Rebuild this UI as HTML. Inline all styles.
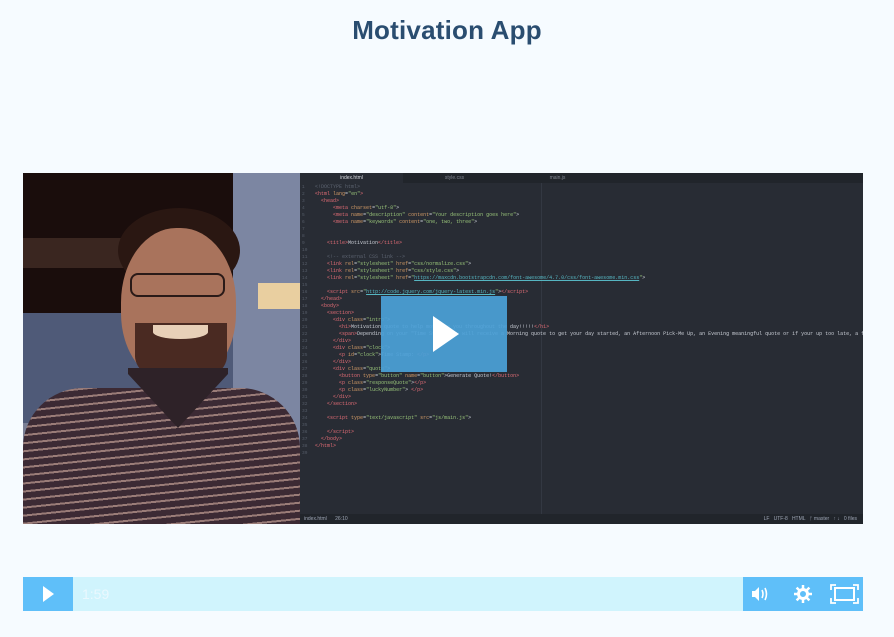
<!DOCTYPE html>
<html><head><style>
body{margin:0;width:894px;height:637px;background:#f6fbff;font-family:"Liberation Sans",sans-serif;position:relative;overflow:hidden}
h1{position:absolute;top:15px;left:0;width:894px;text-align:center;margin:0;font-size:26px;font-weight:bold;color:#2a4d70;letter-spacing:0.2px}
.abs{position:absolute}
#vid{left:23px;top:173px;width:840px;height:351px;overflow:hidden;background:#282c34}
#cam{left:0;top:0;width:277px;height:351px;background:#7a7f95;overflow:hidden}
#ed{left:277px;top:0;width:563px;height:351px;background:#282c34}
.code{position:absolute;left:15px;top:11px;font-family:"Liberation Mono",monospace;font-size:5px;line-height:7px;color:#c8ccd4;white-space:pre}
.ln{position:absolute;left:2px;top:11px;font-family:"Liberation Mono",monospace;font-size:4.5px;line-height:7px;color:#555c68;white-space:pre}
.t{color:#e06c75}.a{color:#d19a66}.s{color:#98c379}.c{color:#5c6370}.u{color:#56b6c2;text-decoration:underline}
</style></head><body>
<h1>Motivation App</h1>
<div id="vid" class="abs">
 <div id="cam" class="abs">
  <div class="abs" style="left:0;top:0;width:210px;height:140px;background:#1a0d0c"></div>
  <div class="abs" style="left:0;top:65px;width:210px;height:30px;background:#3a2620"></div>
  <div class="abs" style="left:0;top:140px;width:210px;height:110px;background:#4f5a78"></div>
  <div class="abs" style="left:210px;top:0;width:67px;height:351px;background:#7c86a2"></div>
  <div class="abs" style="left:235px;top:110px;width:42px;height:26px;background:#e9cfa0"></div>
  <div class="abs" style="left:95px;top:35px;width:122px;height:85px;border-radius:50%;background:#2a1712"></div>
  <div class="abs" style="left:98px;top:55px;width:115px;height:155px;border-radius:48% 48% 45% 45%;background:#a9735c"></div>
  <div class="abs" style="left:112px;top:150px;width:92px;height:60px;border-radius:0 0 45% 45%;background:#4a2a22"></div>
  <div class="abs" style="left:130px;top:152px;width:55px;height:14px;border-radius:0 0 50% 50%;background:#e8d0b8"></div>
  <div class="abs" style="left:107px;top:100px;width:95px;height:24px;border:2px solid #2a1a18;border-radius:8px;box-sizing:border-box"></div>
  <div class="abs" style="left:0;top:215px;width:277px;height:136px;border-radius:60px 60px 0 0;background:repeating-linear-gradient(174deg,#3c2a34 0 6px,#9a7c78 6px 8px)"></div>
  <div class="abs" style="left:105px;top:195px;width:100px;height:60px;background:#2e2228;clip-path:polygon(0 10%,50% 100%,100% 10%,100% 0,0 0)"></div>
 </div>
 <div id="ed" class="abs">
  <div class="abs" style="left:0;top:0;width:563px;height:10px;background:#21252b"></div>
  <div class="abs" style="left:0;top:0;width:103px;height:10px;background:#282c34;font-size:5px;color:#d7dae0;text-align:center;line-height:10px">index.html</div>
  <div class="abs" style="left:103px;top:0;width:103px;height:10px;font-size:5px;color:#7f8490;text-align:center;line-height:10px">style.css</div>
  <div class="abs" style="left:206px;top:0;width:103px;height:10px;font-size:5px;color:#7f8490;text-align:center;line-height:10px">main.js</div>
  <div class="abs" style="left:241px;top:10px;width:1px;height:331px;background:#333842"></div>
  <div class="ln">1
2
3
4
5
6
7
8
9
10
11
12
13
14
15
16
17
18
19
20
21
22
23
24
25
26
27
28
29
30
31
32
33
34
35
36
37
38
39</div>
  <div class="code"><span class="c">&lt;!DOCTYPE html&gt;</span>
<span class="t">&lt;html</span> <span class="a">lang</span>=<span class="s">"en"</span><span class="t">&gt;</span>
  <span class="t">&lt;head&gt;</span>
      <span class="t">&lt;meta</span> <span class="a">charset</span>=<span class="s">"utf-8"</span>&gt;
      <span class="t">&lt;meta</span> <span class="a">name</span>=<span class="s">"description"</span> <span class="a">content</span>=<span class="s">"Your description goes here"</span>&gt;
      <span class="t">&lt;meta</span> <span class="a">name</span>=<span class="s">"keywords"</span> <span class="a">content</span>=<span class="s">"one, two, three"</span>&gt;


    <span class="t">&lt;title&gt;</span>Motivation<span class="t">&lt;/title&gt;</span>

    <span class="c">&lt;!-- external CSS link --&gt;</span>
    <span class="t">&lt;link</span> <span class="a">rel</span>=<span class="s">"stylesheet"</span> <span class="a">href</span>=<span class="s">"css/normalize.css"</span>&gt;
    <span class="t">&lt;link</span> <span class="a">rel</span>=<span class="s">"stylesheet"</span> <span class="a">href</span>=<span class="s">"css/style.css"</span>&gt;
    <span class="t">&lt;link</span> <span class="a">rel</span>=<span class="s">"stylesheet"</span> <span class="a">href</span>=<span class="s">"</span><span class="u">https://maxcdn.bootstrapcdn.com/font-awesome/4.7.0/css/font-awesome.min.css</span><span class="s">"</span>&gt;

    <span class="t">&lt;script</span> <span class="a">src</span>=<span class="s">"</span><span class="u">http://code.jquery.com/jquery-latest.min.js</span><span class="s">"</span>&gt;<span class="t">&lt;/script&gt;</span>
  <span class="t">&lt;/head&gt;</span>
  <span class="t">&lt;body&gt;</span>
    <span class="t">&lt;section&gt;</span>
      <span class="t">&lt;div</span> <span class="a">class</span>=<span class="s">"intro"</span>&gt;
        <span class="t">&lt;h1&gt;</span>Motivation quote to help motivate you throughout the day!!!!!<span class="t">&lt;/h1&gt;</span>
        <span class="t">&lt;span&gt;</span>Depending on your "Time Stamp" you will receive a Morning quote to get your day started, an Afternoon Pick-Me Up, an Evening meaningful quote or if your up too late, a funny quote
      <span class="t">&lt;/div&gt;</span>
      <span class="t">&lt;div</span> <span class="a">class</span>=<span class="s">"clock"</span>&gt;
        <span class="t">&lt;p</span> <span class="a">id</span>=<span class="s">"clock"</span>&gt;Time Stamp: <span class="t">&lt;/p&gt;</span>
      <span class="t">&lt;/div&gt;</span>
      <span class="t">&lt;div</span> <span class="a">class</span>=<span class="s">"quote"</span>&gt;
        <span class="t">&lt;button</span> <span class="a">type</span>=<span class="s">"button"</span> <span class="a">name</span>=<span class="s">"button"</span>&gt;Generate Quote!<span class="t">&lt;/button&gt;</span>
        <span class="t">&lt;p</span> <span class="a">class</span>=<span class="s">"responseQuote"</span>&gt;<span class="t">&lt;/p&gt;</span>
        <span class="t">&lt;p</span> <span class="a">class</span>=<span class="s">"luckyNumber"</span>&gt; <span class="t">&lt;/p&gt;</span>
      <span class="t">&lt;/div&gt;</span>
    <span class="t">&lt;/section&gt;</span>

    <span class="t">&lt;script</span> <span class="a">type</span>=<span class="s">"text/javascript"</span> <span class="a">src</span>=<span class="s">"js/main.js"</span>&gt;

    <span class="t">&lt;/script&gt;</span>
  <span class="t">&lt;/body&gt;</span>
<span class="t">&lt;/html&gt;</span>
</div>
  <div class="abs" style="left:0;top:341px;width:563px;height:10px;background:#21252b;font-size:5px;color:#9da5b4;line-height:10px;padding-left:4px;box-sizing:border-box">index.html &nbsp;&nbsp;&nbsp;&nbsp; 26:10<span style="position:absolute;right:6px">LF &nbsp; UTF-8 &nbsp; HTML &nbsp; ᚠ master &nbsp; ↑ ↓ &nbsp; 0 files</span></div>
  <div class="abs" style="left:81px;top:123px;width:126px;height:76px;background:rgba(75,160,215,0.93)">
   <div class="abs" style="left:52px;top:20px;width:0;height:0;border-left:26px solid #fff;border-top:18px solid transparent;border-bottom:18px solid transparent"></div>
  </div>
 </div>
</div>
<div class="abs" style="left:23px;top:577px;width:840px;height:34px;background:#d0f4fd"></div>
<div class="abs" style="left:23px;top:577px;width:50px;height:34px;background:#5fbff9">
 <div class="abs" style="left:20px;top:9px;border-left:11px solid #fff;border-top:8px solid transparent;border-bottom:8px solid transparent"></div>
</div>
<div class="abs" style="left:82px;top:586px;font-size:14px;color:#eaf8fe">1:59</div>
<div class="abs" style="left:743px;top:577px;width:120px;height:34px;background:#5fbff9">
 <svg width="120" height="34" viewBox="0 0 120 34">
  <path d="M9 14h3l4-4v14l-4-4H9z" fill="#fff"/>
  <path d="M19 13q2 4 0 8M22 11q3 6 0 12" stroke="#fff" stroke-width="1.6" fill="none"/>
  <g transform="translate(60,17)" fill="none" stroke="#fff">
   <circle r="4.5" stroke-width="3"/>
   <path d="M0-9v4M0 5v4M-9 0h4M5 0h4M-6.4-6.4l2.8 2.8M3.6 3.6l2.8 2.8M-6.4 6.4l2.8-2.8M3.6-3.6l2.8-2.8" stroke-width="2.5"/>
  </g>
  <path d="M88 13v-5h5M110 8h5v5M115 21v5h-5M93 26h-5v-5" stroke="#fff" stroke-width="1.8" fill="none"/>
  <rect x="92" y="11" width="19" height="12" stroke="#fff" stroke-width="2" fill="none"/>
 </svg>
</div>
</body></html>
